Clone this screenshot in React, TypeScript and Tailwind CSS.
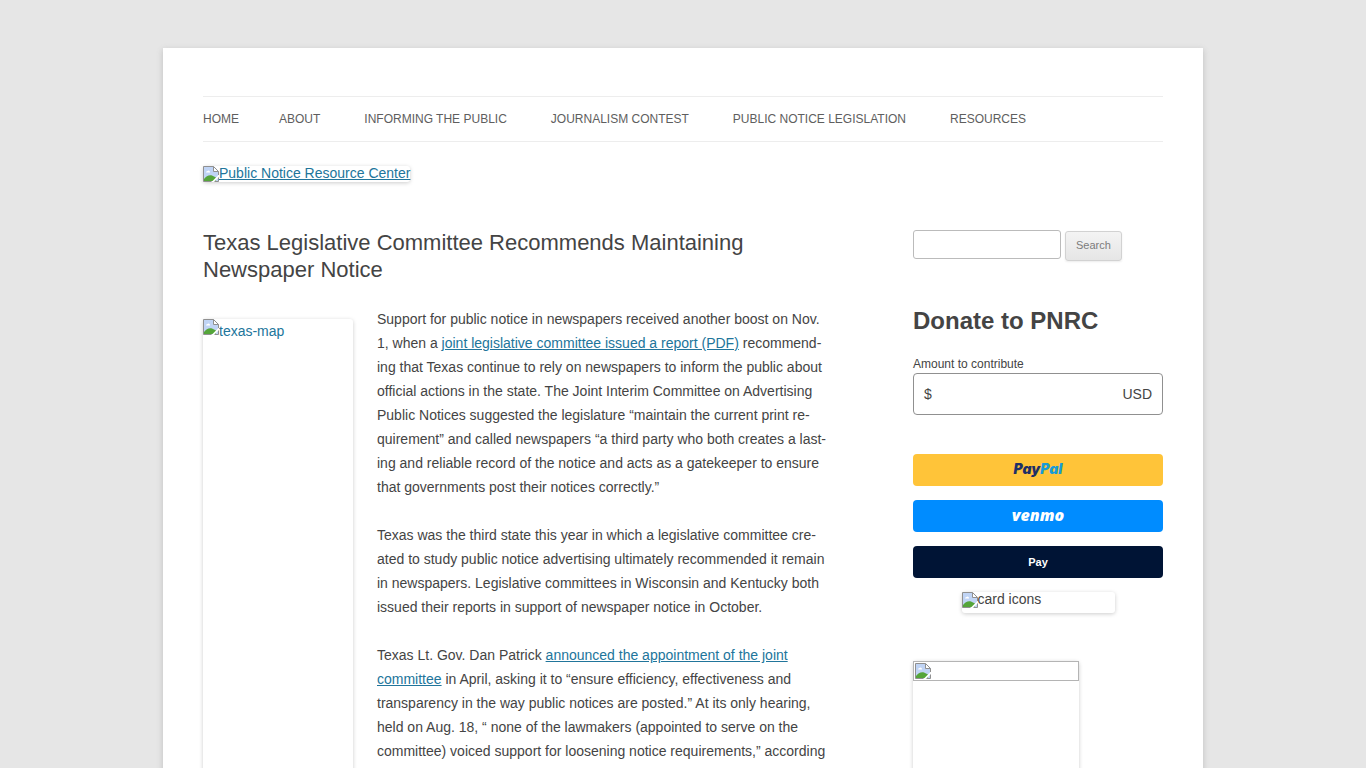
const navItems = [
    'Home',
    'About',
    'Informing the Public',
    'Journalism Contest',
    'Public Notice Legislation',
    'Resources',
];

function ImageIcon() {
    return (
        <svg className="shrink-0" width="16" height="16" viewBox="0 0 16 16" aria-hidden="true">
            <path fill="#c0d4f5" d="M.5.500h10.500l4.500 4.500v10.500H.5z" />
            <path fill="#fff" d="M3 6.500a1.500 1.500 0 0 1 1.500-1.500a1.500 1.500 0 0 1 2.500 1v.5H3z" />
            <path fill="#55a53a" d="M1 15v-2C3 10.500 6 8.500 9 9.500l4 2V15z" />
            <path fill="#fff" d="M8.500 16L16 8.500V11l-5 5z" />
            <path fill="#fff" d="M10.500.5v5h5z" />
            <path fill="none" stroke="#909090" d="M8.500 15.500H.5V.5h10l5 5V9M10.500.5v5h5M11.500 15.500h4v-4" />
        </svg>
    );
}

export default function App() {
    return (
        <div className="min-h-screen bg-[#e6e6e6] pt-12 font-['Liberation_Sans',Arial,sans-serif] text-sm leading-6 text-[#444]">
            <div className="mx-auto max-w-[1040px] bg-white px-10 pt-12 shadow-[0_2px_6px_rgba(100,100,100,0.3)]">
                <header>
                    <nav className="border-y border-[#ededed]">
                        <ul className="flex text-xs leading-[44px] text-[#5e5e5e] uppercase">
                            {navItems.map((item) => (
                                <li key={item} className="mr-11 whitespace-nowrap first:mr-10">
                                    <a href="#">{item}</a>
                                </li>
                            ))}
                        </ul>
                    </nav>
                    <a href="#" className="mt-6 flex h-4 w-fit items-start rounded-[3px] leading-[14px] text-[#21759b] underline shadow-[0_1px_4px_rgba(0,0,0,0.2)]">
                        <ImageIcon />
                        Public Notice Resource Center
                    </a>
                </header>

                <div className="mt-[47px] flex justify-between">
                    <main className="w-[65.1%]">
                        <h1 className="text-[22px] leading-[27px]">Texas Legislative Committee Recommends Maintaining Newspaper Notice</h1>

                        <div className="mt-6 flex gap-6">
                            <a href="#" className="mt-3 flex h-[520px] w-[150px] shrink-0 items-start rounded-[3px] text-[#21759b] shadow-[0_1px_4px_rgba(0,0,0,0.2)]">
                                <ImageIcon />
                                texas-map
                            </a>
                            <div className="flex flex-1 flex-col gap-6">
                                <p>
                                    Support for public notice in newspapers received another boost on Nov. 1, when a{' '}
                                    <a href="#" className="text-[#21759b] underline">joint legislative committee issued a report (PDF)</a>{' '}
                                    recommend&shy;ing that Texas continue to rely on newspapers to inform the public about official actions in the state. The Joint Interim Committee on Advertising Public Notices suggested the legislature “maintain the current print re&shy;quirement” and called newspapers “a third party who both creates a last&shy;ing and reliable record of the notice and acts as a gatekeeper to ensure that governments post their notices correctly.”
                                </p>
                                <p>
                                    Texas was the third state this year in which a legislative committee cre&shy;ated to study public notice advertising ultimately recommended it remain in newspapers. Legislative committees in Wisconsin and Kentucky both issued their reports in support of newspaper notice in October.
                                </p>
                                <p>
                                    Texas Lt. Gov. Dan Patrick <a href="#" className="text-[#21759b] underline">announced the appointment of the joint committee</a> in April, asking it to “ensure efficiency, effectiveness and transparency in the way public notices are posted.” At its only hearing, held on Aug. 18, “ none of the lawmakers (appointed to serve on the committee) voiced support for loosening notice requirements,” according
                                </p>
                            </div>
                        </div>
                    </main>

                    <aside className="w-[250px]">
                        <form className="flex items-start gap-1 pt-px">
                            <input type="text" aria-label="Search for" className="h-[29px] w-[148px] rounded-[3px] border border-[#bbb] px-1.5" />
                            <button type="button" className="mt-px h-[30px] rounded-[3px] border border-[#d2d2d2] bg-linear-to-b from-[#f4f4f4] to-[#e6e6e6] px-2.5 pb-0.5 text-[11px] leading-4 text-[#7c7c7c] shadow-[0_1px_2px_rgba(64,64,64,0.1)]">Search</button>
                        </form>

                        <h2 className="mt-11 text-2xl leading-8 font-bold">Donate to PNRC</h2>

                        <form className="mt-[18px]">
                            <label htmlFor="amount" className="block text-xs leading-[18px]">Amount to contribute</label>
                            <div className="flex h-[42px] items-center rounded-[4px] border border-[#909090] px-2.5">
                                <span>$</span>
                                <input id="amount" type="text" className="min-w-0 flex-1 px-1 outline-none" />
                                <span>USD</span>
                            </div>

                            <div className="mt-[39px] flex flex-col gap-3.5">
                                <button type="button" aria-label="PayPal" className="flex h-8 items-center justify-center rounded-[4px] bg-[#ffc439] pb-0.5 font-['Inter',sans-serif] text-sm leading-4 font-black italic">
                                    <span className="text-[#1f2f66]">Pay</span>
                                    <span className="text-[#179bd7]">Pal</span>
                                </button>
                                <button type="button" className="flex h-8 items-center justify-center rounded-[4px] bg-[#008cff] pb-0.5 font-['Open_Sans',sans-serif] text-base leading-4 font-extrabold text-white italic">venmo</button>
                                <button type="button" className="flex h-8 items-center justify-center rounded-[4px] bg-[#001435] text-[11px] font-bold text-white">Pay</button>
                            </div>
                        </form>

                        <div className="mx-auto mt-3.5 flex h-[21px] w-[153px] items-start rounded-[3px] leading-[14px] shadow-[0_1px_4px_rgba(0,0,0,0.2)]">
                            <ImageIcon />
                            card icons
                        </div>

                        <a href="#" aria-label="Sidebar image" className="mt-12 block h-[180px] w-[166px] rounded-[3px] shadow-[0_1px_4px_rgba(0,0,0,0.2)]">
                            <span className="flex h-5 items-center border border-[#b4b4b4] px-px">
                                <ImageIcon />
                            </span>
                        </a>
                    </aside>
                </div>
            </div>
        </div>
    );
}
